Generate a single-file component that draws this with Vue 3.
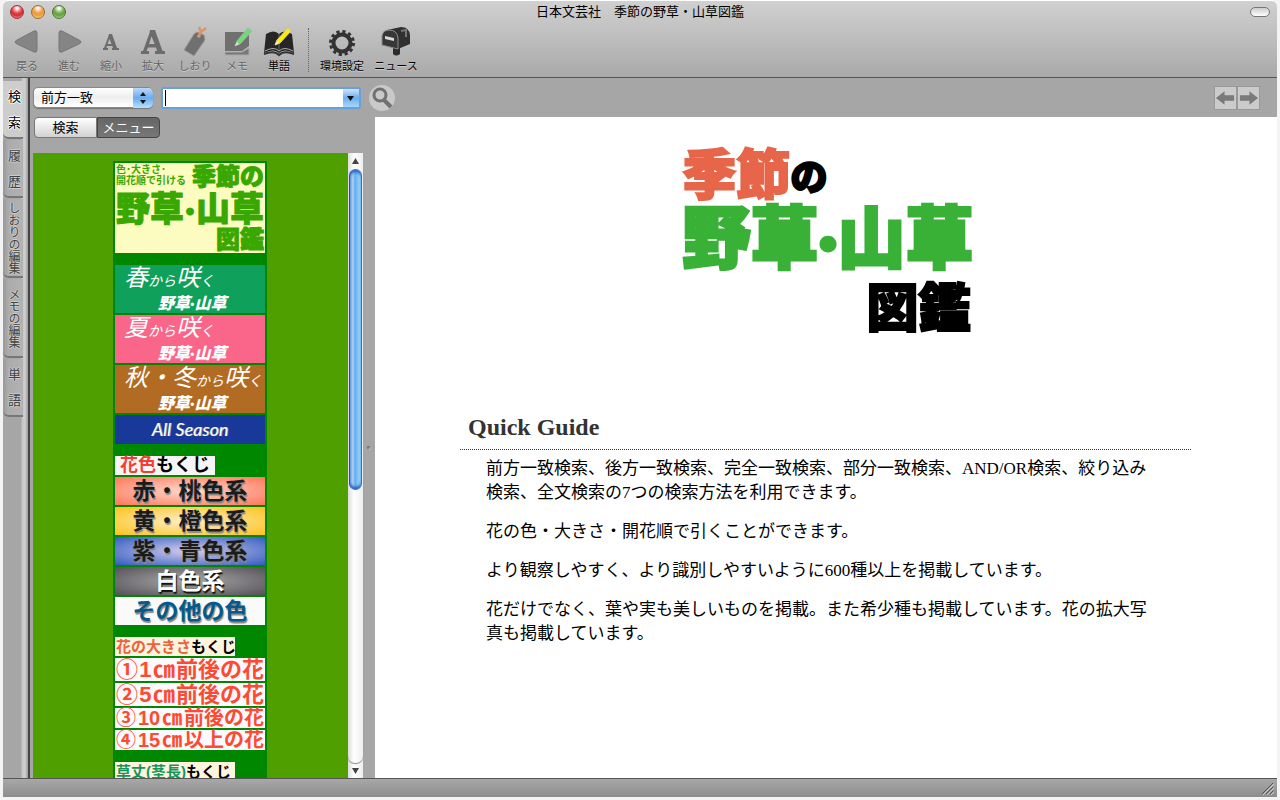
<template>
  <div class="window">
    <header class="titlebar">
      <div class="lights">
        <button class="light red" aria-label="閉じる"></button>
        <button class="light yellow" aria-label="しまう"></button>
        <button class="light green" aria-label="拡大する"></button>
      </div>
      <h1>日本文芸社　季節の野草・山草図鑑</h1>
      <div class="title-end">
        <button class="pill" aria-label="ツールバー"></button>
      </div>
    </header>

    <nav class="toolbar">
      <button class="tool" disabled>
        <svg width="30" height="32" viewBox="0 0 30 32">
          <path d="M3 16 Q3 15 5 14 L22 5 Q25 4 25 7 V24 Q25 27 22 26 L5 18 Q3 17 3 16Z" fill="#858585" stroke="#777" />
        </svg>
        <span>戻る</span>
      </button>
      <button class="tool" disabled>
        <svg width="30" height="32" viewBox="0 0 30 32">
          <path d="M27 16 Q27 15 25 14 L8 5 Q5 4 5 7 V24 Q5 27 8 26 L25 18 Q27 17 27 16Z" fill="#858585" stroke="#777" />
        </svg>
        <span>進む</span>
      </button>
      <button class="tool" disabled>
        <svg width="30" height="32" viewBox="0 0 30 32">
          <path
            d="M13 8 H16 L21 22 H23 V24 H16 V22 H17 L16.200 20 H11 L10.300 22 H12 V24 H7 V22 H8 L12.500 10Z M13.500 13 L11.500 18 H15.500Z"
            fill="#6c6c6c"
            fill-rule="evenodd"
          />
        </svg>
        <span>縮小</span>
      </button>
      <button class="tool" disabled>
        <svg width="30" height="32" viewBox="0 0 30 32">
          <path
            d="M12 4 H17 L24.500 25 H27 V28 H17 V25 H19 L18 21.500 H10 L8.500 25 H11 V28 H3 V25 H5 L11.500 7Z M13.500 10.500 L11 18 H16.700Z"
            fill="#6c6c6c"
            fill-rule="evenodd"
          />
        </svg>
        <span>拡大</span>
      </button>
      <button class="tool" disabled>
        <svg width="30" height="32" viewBox="0 0 30 32">
          <path d="M14 8 L17 6 L24 9 L25 14 L14 30 L4 24 Z" fill="#707070" stroke="#9a9a9a" />
          <circle cx="19" cy="10" r="1.500" fill="#bbb" />
          <path d="M18 11 L21 6 L19 1 M21 6 L26 2" fill="none" stroke="#dd9465" stroke-width="2.500" />
        </svg>
        <span>しおり</span>
      </button>
      <button class="tool" disabled>
        <svg width="30" height="32" viewBox="0 0 30 32">
          <path d="M3 6 H27 V20 L20 25 H3Z" fill="#707070" />
          <path d="M3 26 H20 L27 22 V29 H3Z" fill="#787878" stroke="#aaa" stroke-width="1" />
          <path d="M13 20 L15 15 L26 2 L30 5 L18 18Z" fill="#6fdc72" stroke="#a5b5a5" />
          <path d="M13 20 L15 16 L17 18Z" fill="#ddd" />
        </svg>
        <span>メモ</span>
      </button>
      <button class="tool">
        <svg width="32" height="32" viewBox="0 0 32 32">
          <path d="M3 8 Q11 3 16 8 Q21 3 29 8 L31 27 Q21 22 16 27 Q11 22 1 27Z" fill="#262626" />
          <path d="M1 28 Q11 24 16 29 Q21 24 31 28" fill="none" stroke="#333" stroke-width="2" />
          <path d="M2 25 Q11 20 16 25 Q21 20 30 25" fill="none" stroke="#aaa" />
          <path d="M16 8 V24" stroke="#666" />
          <path d="M12 19 L14 14 L25 2 L28 5 L17 17Z" fill="#ffed00" stroke="#d4cf83" />
          <path d="M12 19 L14 15 L16 17Z" fill="#eee" />
        </svg>
        <span>単語</span>
      </button>
      <i class="separator"></i>
      <button class="tool wide">
        <svg width="30" height="32" viewBox="0 0 30 32">
          <circle cx="15" cy="17" r="8.500" fill="none" stroke="#333" stroke-width="4" />
          <circle cx="15" cy="17" r="11.500" fill="none" stroke="#333" stroke-width="3" stroke-dasharray="3.200 2.820" />
        </svg>
        <span>環境設定</span>
      </button>
      <button class="tool wide">
        <svg width="30" height="32" viewBox="0 0 30 32">
          <path d="M12 20 H19 V28 Q15 31 12 28Z" fill="#2b2b2b" />
          <path d="M6 4 L20 1 Q28 1 29 9 V18 L17 23 V11 Q15 4 6 4Z" fill="#303030" />
          <path d="M1 10 Q2 4 8 4 Q16 4 17 12 V23 L1 19Z" fill="#373737" stroke="#8b8b8b" />
          <path d="M4 10 L13 12 V15 L4 13Z" fill="#d9d9d9" />
          <path d="M20 5 L25 4 V11" fill="none" stroke="#777" stroke-width="2" />
        </svg>
        <span>ニュース</span>
      </button>
    </nav>

    <div class="main">
      <div class="tabs">
        <button
          v-for="tab in tabs"
          :key="tab.label"
          class="tab"
          :class="{ active: tab.label === activeTab, short: tab.short }"
          @click="activeTab = tab.label"
        >{{ tab.label }}</button>
      </div>

      <div class="body">
        <form class="search" @submit.prevent>
          <div class="select">
            <select v-model="mode" aria-label="検索方法">
              <option>前方一致</option>
              <option>後方一致</option>
              <option>完全一致</option>
              <option>部分一致</option>
            </select>
            <svg class="stepper" width="20" height="20" viewBox="0 0 20 20">
              <path d="M10 4 L13 8 H7Z M10 16 L13 12 H7Z" fill="#111" />
            </svg>
          </div>
          <div class="combo">
            <input ref="keyword" v-model="query" :class="{ empty: !query }" type="text" aria-label="検索語" />
            <button type="button" aria-label="履歴を表示">
              <svg width="16" height="18" viewBox="0 0 16 18"><path d="M4 7 H11 L7.500 12Z" fill="#111" /></svg>
            </button>
          </div>
          <button class="find" aria-label="検索する">
            <svg width="26" height="26" viewBox="0 0 26 26">
              <circle cx="11" cy="10" r="6" fill="#c9c9c9" stroke="#717171" stroke-width="3" />
              <path d="M15 15 L22 22" stroke="#717171" stroke-width="4" />
            </svg>
          </button>
          <div class="pager">
            <button type="button" aria-label="前へ">
              <svg width="21" height="22" viewBox="0 0 22 22"><path d="M1 11 L10 4 V8 H20 V14 H10 V18Z" fill="#7a7a7a" /></svg>
            </button>
            <button type="button" aria-label="次へ">
              <svg width="21" height="22" viewBox="0 0 22 22"><path d="M21 11 L12 4 V8 H2 V14 H12 V18Z" fill="#7a7a7a" /></svg>
            </button>
          </div>
        </form>

        <div class="panes">
          <aside class="side">
            <div class="segments">
              <button :class="{ on: view === 'search' }" @click="view = 'search'">検索</button>
              <button :class="{ on: view === 'menu' }" @click="view = 'menu'">メニュー</button>
            </div>
            <div class="list">
              <div class="list-view">
                <div class="menu">
                  <a href="#top" class="cover">
                    <span class="cover-top">
                      <small>色･大きさ･<br />開花順で引ける</small>
                      <b>季節の</b>
                    </span>
                    <b class="cover-main"><span>野草</span><i class="dot">·</i><span>山草</span></b>
                    <b class="cover-end">図鑑</b>
                  </a>

                  <div class="group">
                    <a v-for="s in seasons" :key="s.cls" href="#season" class="season" :class="s.cls">
                      <span class="season-name">{{ s.name }}<small>から</small>咲<small>く</small></span>
                      <b>野草<i class="dot">·</i>山草</b>
                    </a>
                    <a href="#all" class="all">All Season</a>
                  </div>

                  <div class="group">
                    <h2 class="caption colors"><em>花色</em>もくじ</h2>
                    <a v-for="c in colors" :key="c.cls" href="#color" class="color" :class="c.cls">{{ c.name }}</a>
                  </div>

                  <div class="group">
                    <h2 class="caption"><em>花の大きさ</em>もくじ</h2>
                    <a v-for="z in sizes" :key="z.num" href="#size" class="size" :class="{ slim: z.slim }">
                      <span>{{ z.num }}</span><span>{{ z.val }}</span><span>㎝</span><span>{{ z.text }}</span>
                    </a>
                  </div>

                  <div class="group">
                    <h2 class="caption height"><em>草丈(茎長)</em>もくじ</h2>
                  </div>
                </div>
              </div>
              <div class="scroll">
                <button aria-label="上へ">
                  <svg width="15" height="15" viewBox="0 0 15 15"><path d="M7.500 5 L11 11 H4Z" fill="#444" /></svg>
                </button>
                <div class="track"><div class="thumb"></div></div>
                <button aria-label="下へ">
                  <svg width="15" height="15" viewBox="0 0 15 15"><path d="M7.500 11 L11 5 H4Z" fill="#444" /></svg>
                </button>
              </div>
            </div>
          </aside>

          <div class="splitter"><i></i></div>

          <main class="page">
            <div class="logo">
              <div class="logo-top"><b>季節</b><span>の</span></div>
              <div class="logo-main">野草<i class="dot">·</i>山草</div>
              <div class="logo-end">図鑑</div>
            </div>
            <section class="guide">
              <h2>Quick Guide</h2>
              <p v-for="text in guide" :key="text">{{ text }}</p>
            </section>
          </main>
        </div>
      </div>
    </div>

    <footer class="status">
      <svg width="13" height="13" viewBox="0 0 13 13">
        <path d="M1 12 L12 1 M5 12 L12 5 M9 12 L12 9" stroke="#555" />
        <path d="M2 13 L13 2 M6 13 L13 6 M10 13 L13 10" stroke="#ccc" />
      </svg>
    </footer>
  </div>
</template>

<script setup>
import { ref, onMounted } from "vue";

const tabs = [
  { label: "検　索", short: true },
  { label: "履　歴", short: true },
  { label: "しおりの編集" },
  { label: "メモの編集" },
  { label: "単　語", short: true },
];
const activeTab = ref("検　索");
const mode = ref("前方一致");
const query = ref("");
const view = ref("menu");
const keyword = ref(null);

const seasons = [
  { name: "春", cls: "spring" },
  { name: "夏", cls: "summer" },
  { name: "秋・冬", cls: "autumn" },
];

const colors = [
  { name: "赤・桃色系", cls: "pink" },
  { name: "黄・橙色系", cls: "orange" },
  { name: "紫・青色系", cls: "blue" },
  { name: "白色系", cls: "white" },
  { name: "その他の色", cls: "other" },
];

const sizes = [
  { num: "①", val: "1", text: "前後の花" },
  { num: "②", val: "5", text: "前後の花" },
  { num: "③", val: "10", text: "前後の花", slim: true },
  { num: "④", val: "15", text: "以上の花", slim: true },
];

const guide = [
  "前方一致検索、後方一致検索、完全一致検索、部分一致検索、AND/OR検索、絞り込み検索、全文検索の7つの検索方法を利用できます。",
  "花の色・大きさ・開花順で引くことができます。",
  "より観察しやすく、より識別しやすいように600種以上を掲載しています。",
  "花だけでなく、葉や実も美しいものを掲載。また希少種も掲載しています。花の拡大写真も掲載しています。",
];

onMounted(() => keyword.value.focus());
</script>

<style>
body {
  margin: 0;
  background: #f4f4f4;
}
</style>

<style scoped>
* {
  box-sizing: border-box;
}

.window {
  height: calc(100vh - 3px);
  margin: 0 3px;
  border-top: 1px solid #fff;
  border-radius: 6px 6px 0 0;
  display: flex;
  flex-direction: column;
  overflow: hidden;
  background: linear-gradient(#d0d0d0, #a9a9a9 77px, #a6a6a6 78px);
  font-family: "Liberation Sans", "Noto Sans CJK JP", sans-serif;
  color: #000;
}

button {
  font-family: inherit;
  color: inherit;
  padding: 0;
  border: none;
  background: none;
}

svg {
  display: block;
}

a {
  text-decoration: none;
}

.dot {
  font-family: Lato, sans-serif;
  font-style: normal;
}

.titlebar {
  height: 22px;
  flex: none;
  display: flex;
  align-items: center;
}

.lights,
.title-end {
  flex: 1;
  display: flex;
  gap: 7px;
  padding: 0 7px;
}

.title-end {
  justify-content: flex-end;
}

.titlebar h1 {
  margin: 0;
  font-size: 13px;
  font-weight: normal;
  line-height: 20px;
}

.light {
  width: 14px;
  height: 14px;
  border-radius: 50%;
  border: 1px solid #666;
}

.red {
  background: radial-gradient(circle at 50% 20%, #fff 5%, #ee4c50 40%, #d22b30 60%, #ffa5a0);
  border-color: #8d3b3b;
}

.yellow {
  background: radial-gradient(circle at 50% 20%, #fff 5%, #f2a04b 40%, #ee9b3c 60%, #ffe894);
  border-color: #9c6b32;
}

.green {
  background: radial-gradient(circle at 50% 20%, #fff 5%, #7db256 40%, #63a03d 60%, #c5f09a);
  border-color: #4c7433;
}

.pill {
  width: 20px;
  height: 10px;
  border: 1px solid #777;
  border-radius: 5px;
  background: linear-gradient(#ccc, #fff);
}

.toolbar {
  height: 55px;
  flex: none;
  display: flex;
  padding: 3px 3px 0;
  border-bottom: 1px solid #555;
}

.tool {
  width: 42px;
  display: flex;
  flex-direction: column;
  align-items: center;
  font-size: 11px;
  line-height: 16px;
  text-shadow: 0 1px 0 #ccc;
}

.tool.wide {
  width: 54px;
}

.tool:disabled {
  color: #666;
}

.separator {
  height: 44px;
  margin: 2px 6px 0 8px;
  border-left: 1px dotted #666;
}

.main {
  flex: 1;
  min-height: 0;
  display: flex;
}

.tabs {
  width: 27px;
  flex: none;
  padding-top: 3px;
  border-right: 2px solid #444;
  background: linear-gradient(to right, #a6a6a6 18px, #c4c4c4 19px, #d0d0d0 22px, #999);
}

.tab {
  display: block;
  width: 20px;
  height: 79px;
  margin-bottom: 1px;
  border-bottom: 2px solid #777;
  border-radius: 0 0 0 6px;
  background: linear-gradient(to right, #999, #ababab 5px, #b2b2b2);
  color: #444;
  font-size: 12px;
  line-height: 20px;
  writing-mode: vertical-rl;
  text-orientation: upright;
  text-align: center;
  text-shadow: 1px 0 #ccc, -1px 0 #ccc, 0 1px #ccc, 0 -1px #ccc;
}

.tab.short {
  height: 58px;
  font-size: 13px;
}

.tab.active {
  background: #cdcdcd;
  color: #000;
  text-shadow: 1px 0 #fff, -1px 0 #fff, 0 1px #fff, 0 -1px #fff;
}

.body {
  flex: 1;
  min-width: 0;
  display: flex;
  flex-direction: column;
}

.search {
  height: 39px;
  flex: none;
  display: flex;
  align-items: center;
  gap: 8px;
  padding: 0 17px 0 3px;
}

.select {
  position: relative;
  width: 120px;
}

select {
  appearance: none;
  width: 100%;
  height: 21px;
  padding: 0 7px;
  border: 1px solid #888;
  border-radius: 5px;
  background: linear-gradient(#fff, #eee 50%, #fff);
  box-shadow: 0 1px 1px #777;
  font-family: inherit;
  font-size: 13px;
}

.stepper {
  position: absolute;
  top: 1px;
  right: 0;
  border-radius: 0 5px 5px 0;
  background: linear-gradient(#bcd8f8, #69acf0 50%, #b5e3ff);
  pointer-events: none;
}

.combo {
  width: 200px;
  height: 22px;
  display: flex;
  border: 2px solid #67a1d8;
  border-radius: 3px;
}

.combo input {
  flex: 1;
  min-width: 0;
  padding: 0 2px;
  border: none;
  outline: none;
  font-size: 13px;
  background: #fff;
}

.combo input.empty:focus {
  background: linear-gradient(#000, #000) 2px 50% / 1px 16px no-repeat #fff;
  caret-color: transparent;
}

.combo button {
  width: 16px;
  background: linear-gradient(#cfe4fa, #6caef0 50%, #a5d8ff);
}

.find {
  border-radius: 50%;
  background: #c9c9c9;
}

.pager {
  display: flex;
  margin-left: auto;
}

.pager button {
  border: 1px solid #999;
  background: #cbcbcb;
}

.panes {
  flex: 1;
  min-height: 0;
  display: flex;
}

.side {
  width: 333px;
  flex: none;
  padding-left: 3px;
  display: flex;
  flex-direction: column;
}

.segments {
  height: 36px;
  flex: none;
  display: flex;
  align-items: flex-start;
  padding-left: 1px;
}

.segments button {
  width: 63px;
  height: 21px;
  border: 1px solid #777;
  border-radius: 4px 0 0 4px;
  background: linear-gradient(#fff, #d2d2d2);
  font-size: 13px;
  line-height: 18px;
}

.segments button + button {
  border-radius: 0 4px 4px 0;
}

.segments button.on {
  border-color: #444;
  background: linear-gradient(#666, #777);
  color: #fff;
}

.list {
  flex: 1;
  min-height: 0;
  display: flex;
}

.list-view {
  flex: 1;
  overflow: hidden;
  padding: 8px 1px 0 0;
  background: #4f9f00;
}

.menu {
  width: 154px;
  margin: 0 auto;
  padding: 2px;
  display: flex;
  flex-direction: column;
  gap: 12px;
  background: #008700;
  font-weight: bold;
  white-space: nowrap;
}

.cover {
  height: 90px;
  padding: 0 1px;
  display: flex;
  flex-direction: column;
  background: #fdfcc0;
  color: #38a800;
  -webkit-text-stroke: 1px #38a800;
}

.cover-top {
  display: flex;
  justify-content: space-between;
  font-size: 24px;
  line-height: 28px;
}

.cover small {
  padding-top: 1px;
  font-size: 10px;
  font-weight: bold;
  line-height: 11px;
  -webkit-text-stroke: 0;
}

.cover-main {
  display: flex;
  justify-content: space-between;
  font-size: 34px;
  line-height: 36px;
}

.cover-end {
  align-self: flex-end;
  font-size: 24px;
  line-height: 26px;
}

.group {
  display: flex;
  flex-direction: column;
  gap: 2px;
}

.season {
  height: 48px;
  padding-left: 9px;
  display: flex;
  flex-direction: column;
  color: #fff;
  font-style: italic;
}

.season-name {
  height: 28px;
  font-family: "Liberation Serif", "Noto Sans CJK JP", serif;
  font-weight: normal;
  font-size: 24px;
  line-height: 26px;
}

.season small {
  font-size: 14px;
}

.season b {
  padding-left: 34px;
  font-size: 16px;
  line-height: 20px;
}

.spring {
  background: #0fa05c;
}

.summer {
  background: #f9668a;
}

.autumn {
  background: #b26b22;
}

.all {
  height: 29px;
  background: #18389a;
  color: #fff;
  font-family: Lato, sans-serif;
  font-size: 18px;
  font-style: italic;
  font-weight: normal;
  line-height: 29px;
  text-align: center;
  text-shadow: 1px 0 #999;
}

.caption {
  width: 120px;
  height: 19px;
  margin: 0;
  padding-left: 1px;
  background: #fdf5de;
  font-size: 15px;
  line-height: 19px;
}

.caption em {
  font-style: normal;
  color: #ee6040;
}

.caption.colors {
  width: 100px;
  padding-left: 5px;
  background: #f5f5f5;
  font-size: 18px;
}

.caption.colors em {
  color: #f83b34;
}

.caption.height em {
  color: #14965a;
}

.color {
  height: 28px;
  color: #1b1b1b;
  font-size: 23px;
  line-height: 28px;
  text-align: center;
  text-shadow: 1px 2px 1px #888;
}

.pink {
  background: radial-gradient(#fddbd0, #ff7658);
}

.orange {
  background: radial-gradient(#fff0cc, #fcc21a);
}

.blue {
  background: radial-gradient(#d6cdee, #315cc0);
}

.white {
  background: radial-gradient(#aaa, #545157);
  color: #fff;
  text-shadow: 1px 2px 1px #111;
}

.other {
  background: #fafafa;
  color: #06598c;
}

.size {
  height: 23px;
  padding: 0 1px;
  display: flex;
  justify-content: space-between;
  background: #fcfafc;
  color: #ff4a32;
  font-size: 22px;
  line-height: 23px;
}

.size.slim {
  height: 20px;
  font-size: 20px;
  line-height: 20px;
}

.scroll {
  width: 15px;
  flex: none;
  display: flex;
  flex-direction: column;
  background: linear-gradient(to right, #ddd, #fff 6px, #eee);
}

.track {
  flex: 1;
  padding: 1px 1px 0;
  border-radius: 0 0 7px 7px;
  box-shadow: 0 1px 1px #888;
}

.thumb {
  height: 54%;
  border: 1px solid #3d6db0;
  border-left-color: #1c4fc0;
  border-radius: 7px;
  background: linear-gradient(to right, #7eaee8, #afcdf0 3px, #63acf0 5px, #a4e0ff);
  box-shadow: inset 0 3px 3px -1px #1e5fc8, inset 0 -3px 3px -1px #1e5fc8;
}

.splitter {
  width: 12px;
  flex: none;
  display: flex;
  align-items: center;
  justify-content: center;
}

.splitter i {
  width: 4px;
  height: 4px;
  border-radius: 50%;
  background: linear-gradient(135deg, #444, #ddd);
}

.page {
  flex: 1;
  min-width: 0;
  overflow: hidden;
  padding: 26px 86px 0 85px;
  background: #fff;
}

.logo {
  width: 290px;
  margin: 0 auto;
  padding-left: 2px;
  font-weight: 900;
  line-height: 66px;
  white-space: nowrap;
  -webkit-text-stroke: 2px;
}

.logo > div {
  display: flex;
}

.logo-top {
  height: 63px;
  font-size: 54px;
}

.logo-top b {
  color: #e76549;
}

.logo-top span {
  font-size: 37px;
  line-height: 72px;
}

.logo-main {
  height: 70px;
  font-size: 68px;
  color: #39b137;
  -webkit-text-stroke: 3px;
}

.logo-end {
  justify-content: flex-end;
  font-size: 52px;
}

.guide {
  margin-top: 71px;
  font-family: "Liberation Serif", "Noto Sans CJK JP", serif;
  font-size: 17px;
  line-height: 24px;
}

.guide h2 {
  margin: 0 0 7px;
  padding: 0 8px 8px;
  border-bottom: 1px dotted #333;
  color: #333;
  font-size: 24px;
  line-height: 28px;
}

.guide p {
  margin: 0 0 15px;
  padding: 0 36px 0 26px;
}

.status {
  height: 19px;
  flex: none;
  display: flex;
  align-items: flex-end;
  justify-content: flex-end;
  padding: 0 3px 2px;
  border-top: 1px solid #555;
  background: linear-gradient(#a8a8a8, #8d8d8d);
}
</style>
